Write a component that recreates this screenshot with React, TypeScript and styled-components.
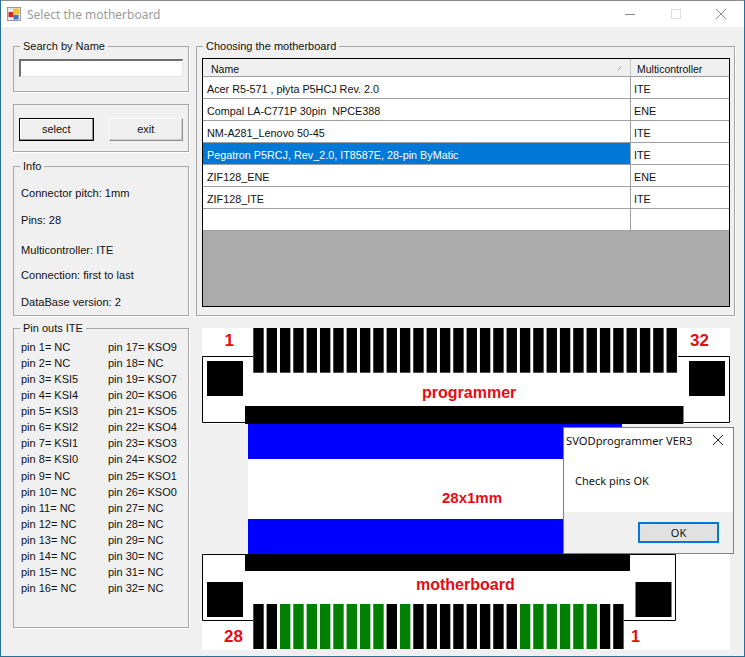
import React from "react";
import styled, { createGlobalStyle } from "styled-components";

const Global = createGlobalStyle`
  html, body { margin: 0; padding: 0; background: #2a6f97; }
  body { width: 745px; height: 657px; overflow: hidden; font-family: "Liberation Sans", Arial, sans-serif; }
  * { box-sizing: border-box; }
`;

const Window = styled.div`
  position: relative;
  width: 743px;
  height: 656px;
  margin-left: 1px;
  background: #f0f0f0;
  border-top: 1px solid #8c8c8c;
  display: flex;
  flex-direction: column;
  font-size: 11px;
  color: #111;
`;

const TitleBar = styled.div`
  height: 26px;
  flex: none;
  background: #fff;
  display: flex;
  align-items: center;
  padding: 0 18px 0 6px;
  gap: 6px;
`;

const TitleText = styled.span`
  flex: 1;
  font-family: "Noto Sans", sans-serif;
  font-size: 12px;
  color: #9b9b9b;
`;

const WinButtons = styled.div`
  display: flex;
  align-items: center;
  gap: 35.5px;
`;

const Content = styled.div`
  flex: 1;
  display: flex;
  padding: 12px 0 0 12px;
  gap: 7px;
`;

const LeftColumn = styled.div`
  width: 176px;
  flex: none;
  display: flex;
  flex-direction: column;
`;

const RightColumn = styled.div`
  width: 539px;
  flex: none;
  display: flex;
  flex-direction: column;
`;

const Group = styled.fieldset<{ $height: number; $top?: number }>`
  margin: ${(p) => p.$top ?? 0}px 0 0;
  padding: 0;
  height: ${(p) => p.$height}px;
  min-width: 0;
  border: 1px solid #a6a6a6;
  box-shadow: 1px 1px 0 #fff;
  flex: none;
`;

const Legend = styled.legend`
  margin-left: 6px;
  padding: 0 3px;
  font-size: 11px;
  line-height: 14px;
`;

const SearchBody = styled.div`
  padding: 6px 5px 0;
`;

const SearchInput = styled.div`
  height: 18px;
  width: 164px;
  background: #fff;
  border: 1px solid #e4e4e4;
  border-top: 2px solid #6e6e6e;
  border-left: 2px solid #6e6e6e;
`;

const ButtonRow = styled.div`
  display: flex;
  gap: 15px;
  padding: 13px 5px 0;
`;

const Button = styled.div<{ $default?: boolean }>`
  width: 75px;
  height: 23px;
  padding-bottom: 2px;
  display: flex;
  align-items: center;
  justify-content: center;
  background: #efefef;
  border: 1px solid ${(p) => (p.$default ? "#000" : "#f9f9f9")};
  border-right-color: ${(p) => (p.$default ? "#000" : "#8f8f8f")};
  border-bottom-color: ${(p) => (p.$default ? "#000" : "#8f8f8f")};
  box-shadow: ${(p) => (p.$default ? "inset -1px -1px 0 #8f8f8f, inset 1px 1px 0 #fff" : "inset -1px -1px 0 #cfcfcf")};
`;

const InfoBody = styled.div`
  padding: 0 0 0 7px;
  display: flex;
  flex-direction: column;
  font-size: 11.1px;
`;

const InfoLine = styled.div<{ $top: number }>`
  margin-top: ${(p) => p.$top}px;
  line-height: 14px;
`;

const PinGrid = styled.div`
  display: grid;
  grid-template-columns: 87px 1fr;
  grid-auto-flow: column;
  grid-template-rows: repeat(16, 16.07px);
  padding: 4px 0 0 7px;
  line-height: 16px;
`;

const GridGroupBody = styled.div`
  padding: 5px 5px 0 5px;
`;

const DataGrid = styled.div`
  height: 249px;
  width: 528px;
  border: 1px solid #000;
  background: #ababab;
  display: flex;
  flex-direction: column;
  font-size: 10.8px;
`;

const HeaderRow = styled.div`
  height: 18px;
  flex: none;
  display: flex;
  background: #f0f0f0;
  border-bottom: 1px solid #a0a0a0;
  font-size: 10.5px;
`;

const HeaderCell = styled.div<{ $wide?: boolean }>`
  ${(p) => (p.$wide ? "width: 428px; padding-left: 8px;" : "flex: 1; padding-left: 6px;")}
  padding-top: 2px;
  display: flex;
  align-items: center;
  justify-content: space-between;
  ${(p) => (p.$wide ? "border-right: 1px solid #c8c8c8; padding-right: 8px;" : "")}
`;

const Row = styled.div<{ $selected?: boolean }>`
  height: 22px;
  flex: none;
  display: flex;
  border-bottom: 1px solid #a0a0a0;
  background: #fff;
  color: ${(p) => (p.$selected ? "#fff" : "#111")};
`;

const NameCell = styled.div<{ $selected?: boolean }>`
  width: 428px;
  flex: none;
  padding: 2px 0 0 4px;
  display: flex;
  align-items: center;
  white-space: pre;
  border-right: 1px solid #a0a0a0;
  background: ${(p) => (p.$selected ? "#0078d7" : "#fff")};
`;

const CtrlCell = styled.div`
  flex: 1;
  padding: 2px 0 0 3px;
  display: flex;
  align-items: center;
  color: #111;
`;

const Diagram = styled.svg`
  display: block;
  margin: 12px 0 0 6px;
  flex: none;
`;

const Dialog = styled.div`
  position: absolute;
  left: 562px;
  top: 426px;
  width: 171px;
  height: 127px;
  background: #fff;
  border: 1px solid #7f7f7f;
  display: flex;
  flex-direction: column;
  font-family: "Noto Sans", sans-serif;
  font-size: 11.2px;
  color: #111;
`;

const DialogTitle = styled.div`
  height: 24px;
  flex: none;
  display: flex;
  align-items: center;
  justify-content: space-between;
  padding: 0 10px 0 2px;
`;

const DialogMessage = styled.div`
  flex: 1;
  padding: 21px 0 0 11px;
  font-size: 11px;
`;

const DialogFooter = styled.div`
  height: 41px;
  flex: none;
  background: #f0f0f0;
  display: flex;
  justify-content: flex-end;
  padding: 10px 14px 0 0;
`;

const OkButton = styled.div`
  width: 81px;
  height: 21px;
  background: #e1e1e1;
  border: 2px solid #0078d7;
  display: flex;
  align-items: center;
  justify-content: center;
  font-size: 11px;
`;

const rows = [
  ["Acer R5-571 , płyta P5HCJ Rev. 2.0", "ITE"],
  ["Compal LA-C771P 30pin  NPCE388", "ENE"],
  ["NM-A281_Lenovo 50-45", "ITE"],
  ["Pegatron P5RCJ, Rev_2.0, IT8587E, 28-pin ByMatic", "ITE"],
  ["ZIF128_ENE", "ENE"],
  ["ZIF128_ITE", "ITE"],
  ["", ""],
];

const pins = [
  "NC","NC","KSI5","KSI4","KSI3","KSI2","KSI1","KSI0","NC","NC","NC","NC","NC","NC","NC","NC",
  "KSO9","NC","KSO7","KSO6","KSO5","KSO4","KSO3","KSO2","KSO1","KSO0","NC","NC","NC","NC","NC","NC",
];

const isGreen = (i: number) => (i >= 2 && i <= 9) || i === 11 || (i >= 20 && i <= 25);
const RED = "#e30d14";

function ConnectorDrawing() {
  const labelStyle = { fontFamily: "'Liberation Sans', Arial, sans-serif", fontWeight: 700 };
  return (
    <Diagram width={528} height={322} viewBox="202 328 528 322">
      <rect x={202} y={328} width={528} height={96} fill="#fff" />
      <rect x={202} y={554} width={528} height={96} fill="#fff" />
      <rect x={248} y={424} width={374} height={130} fill="#fff" />
      <rect x={248} y={424} width={374} height={35} fill="#0000ff" />
      <rect x={248} y={519} width={374} height={35} fill="#0000ff" />

      <path d="M253 356.5H202.5V422.5H245M684 422.5H729.5V356.5H678" fill="none" stroke="#000" />
      <rect x={207} y={361} width={36} height={35} fill="#000" />
      <rect x={689} y={361} width={36} height={35} fill="#000" />
      <rect x={245} y={406} width={438.5} height={18} fill="#000" />
      {Array.from({ length: 32 }, (_, i) => (
        <rect key={i} x={253.3 + i * 13.33} y={328} width={10.4} height={44.7} fill="#000" />
      ))}

      <path d="M245 554.5H202.5V620.5H253M624 620.5H675.5V554.5H630" fill="none" stroke="#000" />
      <rect x={207} y={582} width={36} height={35} fill="#000" />
      <rect x={635.5} y={582} width={36} height={35} fill="#000" />
      <rect x={245} y={554} width={385} height={17} fill="#000" />
      {Array.from({ length: 28 }, (_, i) => (
        <rect key={i} x={253.3 + i * 13.33} y={604} width={10.4} height={45} fill={isGreen(i) ? "#008000" : "#000"} />
      ))}

      <g fill={RED} style={labelStyle}>
        <text x={224.5} y={346} fontSize={17}>1</text>
        <text x={690} y={346} fontSize={17}>32</text>
        <text x={422} y={398} fontSize={16}>programmer</text>
        <text x={442} y={503} fontSize={15}>28x1mm</text>
        <text x={416} y={590} fontSize={16}>motherboard</text>
        <text x={224} y={642} fontSize={17}>28</text>
        <text x={631} y={642} fontSize={16}>1</text>
      </g>
    </Diagram>
  );
}

export default function App() {
  return (
    <>
      <Global />
      <Window>
        <TitleBar>
          <svg width="14" height="14" viewBox="0 0 14 14">
            <rect x="0.5" y="0.5" width="13" height="13" fill="#e8e8e8" stroke="#9a9a9a" />
            <rect x="1.5" y="5" width="5" height="5" fill="#d8261c" />
            <rect x="6" y="1.5" width="6.5" height="6" fill="#f2c230" />
            <rect x="6.5" y="8" width="5" height="4.5" fill="#3f6fd0" />
          </svg>
          <TitleText>Select the motherboard</TitleText>
          <WinButtons>
            <svg width="10" height="10" viewBox="0 0 10 10"><path d="M0 5.5H10" stroke="#8a8a8a" /></svg>
            <svg width="10" height="10" viewBox="0 0 10 10"><rect x="0.5" y="0.5" width="9" height="9" fill="none" stroke="#dcdcdc" /></svg>
            <svg width="10" height="10" viewBox="0 0 10 10"><path d="M0 0L10 10M10 0L0 10" stroke="#8a8a8a" /></svg>
          </WinButtons>
        </TitleBar>
        <Content>
          <LeftColumn>
            <Group $height={53}>
              <Legend>Search by Name</Legend>
              <SearchBody><SearchInput /></SearchBody>
            </Group>
            <Group $height={48} $top={12}>
              <ButtonRow>
                <Button $default>select</Button>
                <Button>exit</Button>
              </ButtonRow>
            </Group>
            <Group $height={157} $top={7}>
              <Legend>Info</Legend>
              <InfoBody>
                <InfoLine $top={13}>Connector pitch: 1mm</InfoLine>
                <InfoLine $top={13}>Pins: 28</InfoLine>
                <InfoLine $top={16}>Multicontroller: ITE</InfoLine>
                <InfoLine $top={11}>Connection: first to last</InfoLine>
                <InfoLine $top={13}>DataBase version: 2</InfoLine>
              </InfoBody>
            </Group>
            <Group $height={307} $top={5}>
              <Legend>Pin outs ITE</Legend>
              <PinGrid>
                {pins.map((p, i) => (
                  <div key={i}>pin {i + 1}= {p}</div>
                ))}
              </PinGrid>
            </Group>
          </LeftColumn>
          <RightColumn>
            <Group $height={277}>
              <Legend>Choosing the motherboard</Legend>
              <GridGroupBody>
                <DataGrid>
                  <HeaderRow>
                    <HeaderCell $wide>
                      <span>Name</span>
                      <svg width="5" height="5" viewBox="0 0 5 5"><path d="M1 4.5L4 0.5" stroke="#9a9a9a" /></svg>
                    </HeaderCell>
                    <HeaderCell>Multicontroller</HeaderCell>
                  </HeaderRow>
                  {rows.map(([name, ctrl], i) => (
                    <Row key={i} $selected={i === 3}>
                      <NameCell $selected={i === 3}>{name}</NameCell>
                      <CtrlCell>{ctrl}</CtrlCell>
                    </Row>
                  ))}
                </DataGrid>
              </GridGroupBody>
            </Group>
            <ConnectorDrawing />
          </RightColumn>
        </Content>
        <Dialog>
          <DialogTitle>
            <span>SVODprogrammer VER3</span>
            <svg width="10" height="10" viewBox="0 0 10 10"><path d="M0 0L10 10M10 0L0 10" stroke="#222" /></svg>
          </DialogTitle>
          <DialogMessage>Check pins OK</DialogMessage>
          <DialogFooter><OkButton>OK</OkButton></DialogFooter>
        </Dialog>
      </Window>
    </>
  );
}
